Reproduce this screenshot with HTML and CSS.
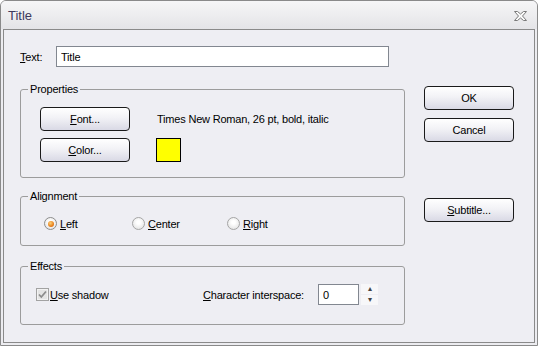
FILE: index.html
```html
<!DOCTYPE html>
<html lang="en">
<head>
    <meta charset="UTF-8">
    <meta name="viewport" content="width=device-width, initial-scale=1.0">
    <title>Title</title>
    <link rel="stylesheet" href="styles.css">
</head>
<body>
    <div class="window">
        <div class="titlebar">
            <span class="caption">Title</span>
            <svg class="close" width="13" height="10" viewBox="0 0 13 10">
                <polygon points="0.5,0.5 3.5,0.5 6.5,3 9.5,0.5 12.5,0.5 8.5,5 12.5,9.5 9.5,9.5 6.5,7 3.5,9.5 0.5,9.5 4.5,5" fill="#fafafa" stroke="#7a7a7a" stroke-width="1"/>
            </svg>
        </div>

        <div class="client">
            <div class="main">
                <div class="text-row">
                    <label class="text-label"><u>T</u>ext:</label>
                    <input class="text-input" type="text" value="Title">
                </div>

                <!-- 属性 -->
                <fieldset class="group">
                    <legend>Properties</legend>
                    <div class="group-body props">
                        <button class="btn"><u>F</u>ont...</button>
                        <span class="font-desc">Times New Roman, 26 pt, bold, italic</span>
                        <button class="btn"><u>C</u>olor...</button>
                        <span class="swatch"></span>
                    </div>
                </fieldset>

                <!-- 对齐 -->
                <fieldset class="group group-align">
                    <legend>Alignment</legend>
                    <div class="group-body align-row">
                        <label class="radio-item item-left"><span class="radio radio-on"></span><span><u>L</u>eft</span></label>
                        <label class="radio-item item-center"><span class="radio"></span><span><u>C</u>enter</span></label>
                        <label class="radio-item"><span class="radio"></span><span><u>R</u>ight</span></label>
                    </div>
                </fieldset>

                <!-- 效果 -->
                <fieldset class="group group-effects">
                    <legend>Effects</legend>
                    <div class="group-body effects-row">
                        <label class="check-item">
                            <svg class="check" width="13" height="13" viewBox="0 0 13 13">
                                <rect x="0.5" y="0.5" width="12" height="12" fill="#e4e4e4" stroke="#a2a2a2"/>
                                <rect x="1.5" y="1.5" width="10" height="10" fill="none" stroke="#f2f2f2"/>
                                <path d="M3 6.5 L5.3 9 L10 3.5" fill="none" stroke="#8c8c8c" stroke-width="1.8"/>
                            </svg>
                            <span><u>U</u>se shadow</span>
                        </label>
                        <label class="char-label"><u>C</u>haracter interspace:</label>
                        <input class="num-input" type="text" value="0">
                        <div class="spin">
                            <span class="spin-btn">&#9652;</span>
                            <span class="spin-btn">&#9662;</span>
                        </div>
                    </div>
                </fieldset>
            </div>

            <div class="side">
                <button class="btn btn-ok">OK</button>
                <button class="btn btn-cancel">Cancel</button>
                <button class="btn btn-subtitle"><u>S</u>ubtitle...</button>
            </div>
        </div>
    </div>
</body>
</html>
```

FILE: styles.css
```css
body {
    margin: 0;
    background-color: #ffffff;
    font-family: "Liberation Sans", Arial, sans-serif;
    font-size: 11px;
    letter-spacing: -0.2px;
    color: #000;
}
.window {
    width: 538px;
    height: 346px;
    box-sizing: border-box;
    border: 1px solid #8a8a8a;
    border-radius: 6px 6px 0 0;
    background-color: #ececf0;
    display: flex;
    flex-direction: column;
}
.titlebar {
    height: 28px;
    display: flex;
    align-items: center;
    justify-content: space-between;
    padding: 0 10px 0 7px;
    background: linear-gradient(#f6f6f7, #e4e4e7);
    border-radius: 5px 5px 0 0;
}
.caption {
    font-size: 13px;
    letter-spacing: 0;
    color: #3e3a5c;
    padding-top: 1px;
}
.close {
    display: block;
    margin-top: 1px;
}
.client {
    flex: 1;
    margin: 0 2px 2px 2px;
    border: 1px solid #8a8a8a;
    background-color: #eeeef3;
    display: flex;
    padding: 16px 0 0 16px;
    gap: 19px;
}
.main {
    width: 385px;
}
.text-row {
    display: flex;
    align-items: center;
    height: 21px;
}
.text-label {
    width: 36px;
}
.text-input {
    width: 333px;
    height: 21px;
    box-sizing: border-box;
    border: 1px solid #828790;
    padding: 0 4px;
    font: inherit;
    letter-spacing: inherit;
    background: #fff;
    outline: none;
}
.group {
    margin: 16px 0 0 0;
    padding: 0;
    border: 1px solid #9c9c9c;
    border-radius: 3px;
    min-width: 0;
}
.group legend {
    margin-left: 7px;
    padding: 0 2px;
    line-height: 13px;
}
.group-align {
    margin-top: 12px;
}
.group-effects {
    margin-top: 14px;
}
.props {
    display: grid;
    grid-template-columns: 90px auto;
    column-gap: 27px;
    row-gap: 7px;
    align-items: center;
    padding: 11px 0 15px 19px;
}
.font-desc {
    padding-bottom: 1px;
}
.swatch {
    width: 25px;
    height: 24px;
    box-sizing: border-box;
    margin-left: -1px;
    background-color: #ffff00;
    border: 1px solid #000;
}
.btn {
    display: block;
    width: 90px;
    height: 24px;
    box-sizing: border-box;
    padding: 0;
    border: 1px solid #1a1a1a;
    border-radius: 4px;
    background: linear-gradient(#ffffff, #f2f2f6 45%, #d9d9e5);
    font: inherit;
    letter-spacing: inherit;
    color: #000;
    text-align: center;
}
.align-row {
    display: flex;
    align-items: center;
    height: 13px;
    padding: 14px 0 15px 23px;
}
.radio-item {
    display: flex;
    align-items: center;
    gap: 3px;
}
.item-left {
    width: 88px;
}
.item-center {
    width: 95px;
}
.radio {
    width: 13px;
    height: 13px;
    box-sizing: border-box;
    border-radius: 50%;
    border: 1px solid #a5a5a5;
    background: radial-gradient(circle at 50% 40%, #ffffff 20%, #dcdcdc);
    display: grid;
    place-items: center;
}
.radio-on {
    border-color: #8c8c8c;
}
.radio-on::after {
    content: "";
    width: 6px;
    height: 6px;
    border-radius: 50%;
    background: radial-gradient(circle at 40% 35%, #fbd27a, #e8801c 60%, #c85a08);
}
.effects-row {
    display: flex;
    align-items: center;
    height: 21px;
    padding: 11px 0 19px 15px;
}
.check-item {
    display: flex;
    align-items: center;
    gap: 1px;
    width: 167px;
}
.check {
    display: block;
}
.char-label {
    width: 115px;
}
.num-input {
    width: 41px;
    height: 21px;
    box-sizing: border-box;
    border: 1px solid #828790;
    padding: 0 4px;
    font: inherit;
    letter-spacing: inherit;
    background: #fff;
    outline: none;
}
.spin {
    margin-left: 2px;
    display: flex;
    flex-direction: column;
    gap: 1px;
}
.spin-btn {
    width: 17px;
    height: 10px;
    background-color: #f7f7f9;
    color: #444;
    font-size: 8px;
    line-height: 10px;
    text-align: center;
}
.side {
    display: flex;
    flex-direction: column;
}
.btn-ok {
    margin-top: 40px;
}
.btn-cancel {
    margin-top: 8px;
}
.btn-subtitle {
    margin-top: 56px;
}
```
